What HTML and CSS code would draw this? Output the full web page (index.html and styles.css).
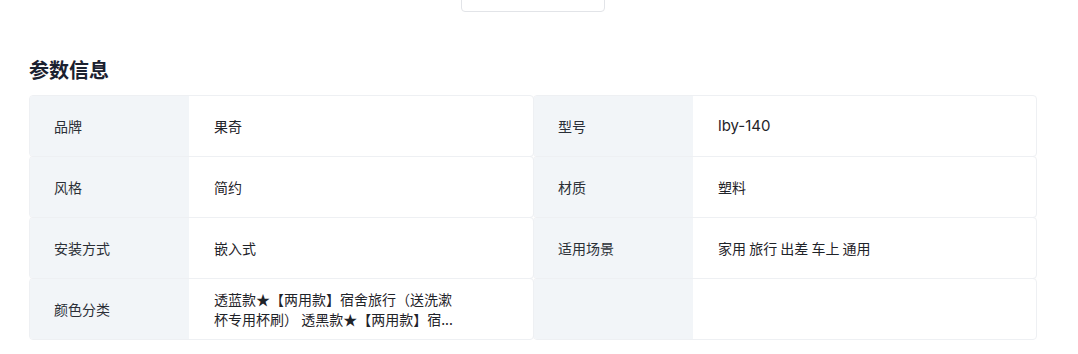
FILE: index.html
```html
<!DOCTYPE html>
<html lang="zh">
<head>
<meta charset="utf-8">
<link rel="stylesheet" href="styles.css">
</head>
<body>
<div class="page">
  <div class="pager-row"><div class="pager-box"></div></div>
  <h2 class="title">参数信息</h2>
  <div class="params">
    <div class="item"><div class="label">品牌</div><div class="value">果奇</div></div>
    <div class="item"><div class="label">型号</div><div class="value latin">lby-140</div></div>
    <div class="item"><div class="label">风格</div><div class="value">简约</div></div>
    <div class="item"><div class="label">材质</div><div class="value">塑料</div></div>
    <div class="item"><div class="label">安装方式</div><div class="value">嵌入式</div></div>
    <div class="item"><div class="label">适用场景</div><div class="value">家用 旅行 出差 车上 通用</div></div>
    <div class="item"><div class="label">颜色分类</div><div class="value"><span class="clamp">透蓝款★【两用款】宿舍旅行（送洗漱杯专用杯刷） 透黑款★【两用款】宿...</span></div></div>
    <div class="item"><div class="label"></div><div class="value"></div></div>
  </div>
</div>
</body>
</html>
```
FILE: styles.css
```css
html, body {
  margin: 0;
  padding: 0;
  background: #ffffff;
}
body {
  font-family: "Noto Sans CJK SC", "Noto Sans", sans-serif;
  color: #1f2329;
}
.page {
  width: 1007px;
  margin-left: 29px;
}
.pager-row {
  display: flex;
  justify-content: center;
  height: 11px;
  overflow: visible;
}
.pager-box {
  width: 142px;
  height: 30px;
  margin-top: -20px;
  border: 1px solid #e2e4e8;
  border-radius: 4px;
  background: #fff;
}
.title {
  margin: 45px 0 0 0;
  font-size: 20px;
  line-height: 28px;
  font-weight: 700;
  color: #1b2130;
  height: 28px;
}
.params {
  margin-top: 11px;
  display: grid;
  grid-template-columns: 505px 503px;
}
.item {
  display: flex;
  height: 62px;
  box-sizing: border-box;
  border: 1px solid #eef0f3;
  border-radius: 4px;
  overflow: hidden;
  margin-top: -1px;
}
.item:nth-child(-n+2) {
  margin-top: 0;
}
.item:nth-child(2n) {
  margin-left: -1px;
}
.label {
  width: 159px;
  flex: none;
  background: #f2f5f8;
  display: flex;
  align-items: center;
  padding-left: 24px;
  box-sizing: border-box;
  font-size: 14px;
  color: #2b2f36;
}
.value {
  flex: 1;
  display: flex;
  align-items: center;
  padding-left: 25px;
  font-size: 14px;
  line-height: 20px;
  color: #1f2329;
}
.latin {
  font-family: "Inter", "Noto Sans CJK SC", sans-serif;
  font-size: 15px;
}
.clamp {
  width: 245px;
}
```
